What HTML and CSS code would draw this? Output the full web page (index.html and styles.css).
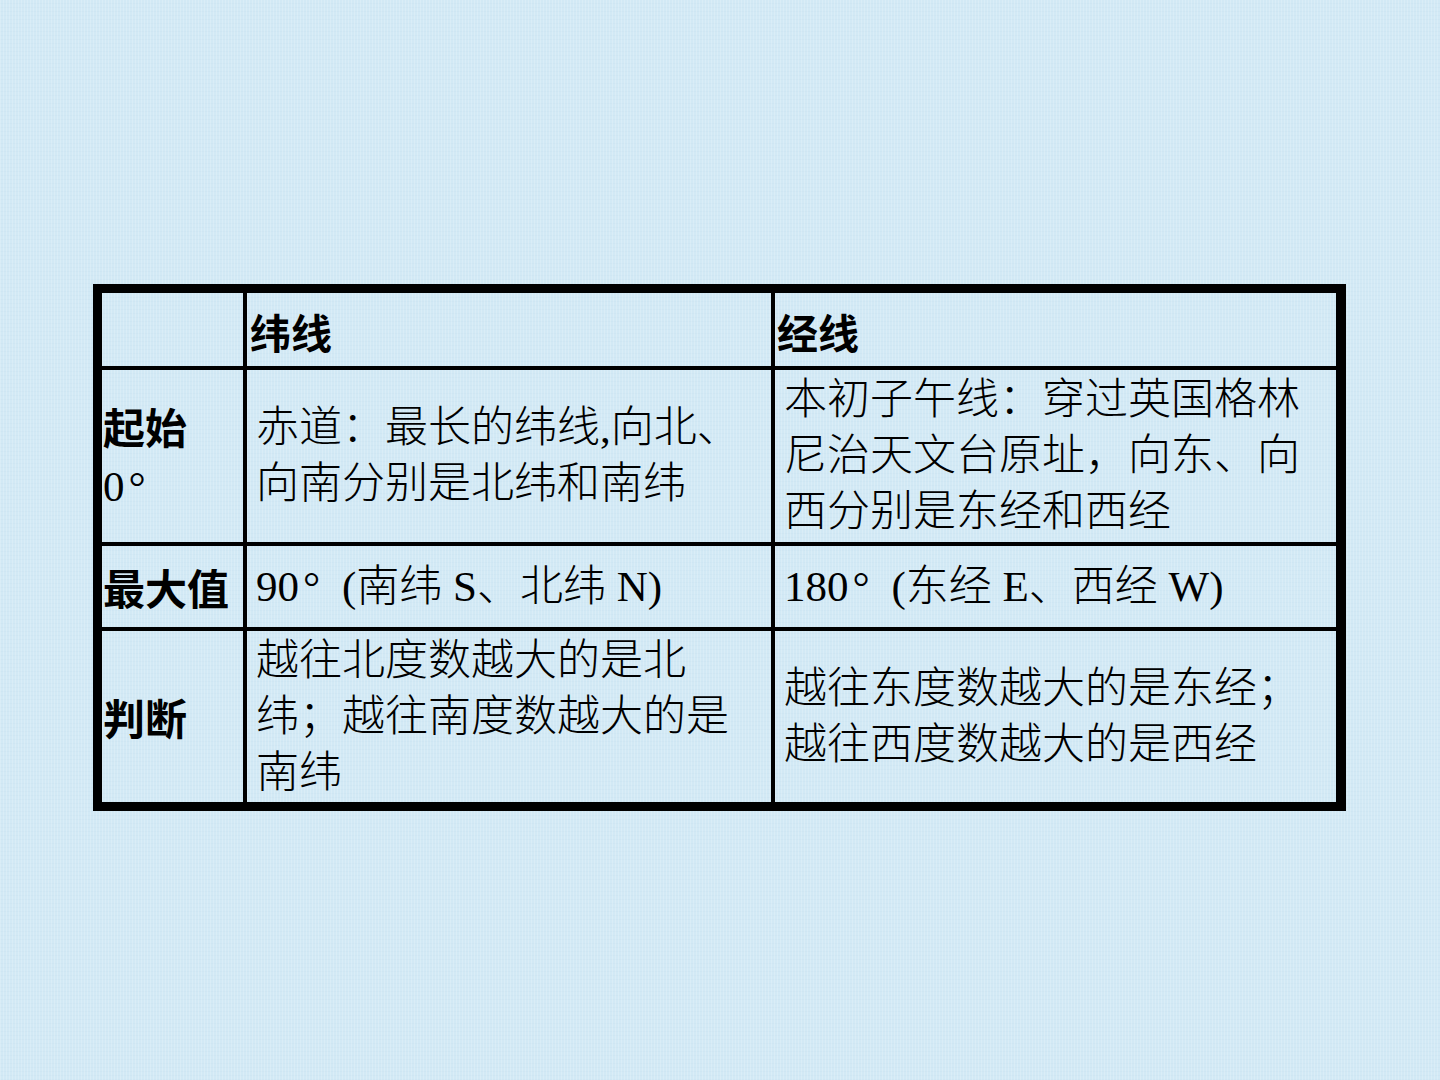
FILE: index.html
```html
<!DOCTYPE html>
<html lang="zh-CN">
<head>
<meta charset="utf-8">
<title>纬线与经线</title>
<link rel="stylesheet" href="styles.css">
</head>
<body>
<main class="slide">
  <div class="grid">
    <div class="cell head"><div class="txt"></div></div>
    <div class="cell head"><div class="txt">纬线</div></div>
    <div class="cell head col3"><div class="txt">经线</div></div>

    <div class="cell label"><div class="txt">起始<br><span class="num">0</span><span class="deg">°</span></div></div>
    <div class="cell body"><div class="txt">赤道：最长的纬线,向北、<br>向南分别是北纬和南纬</div></div>
    <div class="cell body"><div class="txt">本初子午线：穿过英国格林<br>尼治天文台原址，向东、向<br>西分别是东经和西经</div></div>

    <div class="cell label"><div class="txt">最大值</div></div>
    <div class="cell body"><div class="txt">90<span class="deg">°</span>(南纬 S、北纬 N)</div></div>
    <div class="cell body"><div class="txt">180<span class="deg">°</span>(东经 E、西经 W)</div></div>

    <div class="cell label"><div class="txt">判断</div></div>
    <div class="cell body"><div class="txt">越往北度数越大的是北<br>纬；越往南度数越大的是<br>南纬</div></div>
    <div class="cell body"><div class="txt">越往东度数越大的是东经；<br>越往西度数越大的是西经</div></div>
  </div>
</main>
</body>
</html>
```

FILE: styles.css
```css
html, body {
  margin: 0;
  padding: 0;
}

body {
  width: 1440px;
  height: 1080px;
  overflow: hidden;
  background-color: #d2e9f5;
  background-image:
    repeating-linear-gradient(90deg, rgba(255,255,255,0.18) 0 1px, rgba(255,255,255,0) 1px 3px),
    repeating-linear-gradient(0deg, rgba(180,210,230,0.12) 0 1px, rgba(255,255,255,0) 1px 4px);
  font-family: "Liberation Serif", "Noto Sans CJK SC", serif;
  color: #000;
}

.slide {
  padding: 284px 0 0 93px;
}

.grid {
  display: grid;
  width: 1253px;
  box-sizing: border-box;
  padding: 9px 10px 9px 9px;
  background: #000;
  grid-template-columns: 141px 524px 561px;
  grid-template-rows: 73px 172px 81px 171px;
  column-gap: 4px;
  row-gap: 4px;
}

.cell {
  background-color: #d2e9f5;
  background-image:
    repeating-linear-gradient(90deg, rgba(255,255,255,0.18) 0 1px, rgba(255,255,255,0) 1px 3px),
    repeating-linear-gradient(0deg, rgba(180,210,230,0.12) 0 1px, rgba(255,255,255,0) 1px 4px);
  display: flex;
  align-items: center;
  white-space: nowrap;
  font-size: 43px;
  line-height: 56px;
}

.head {
  font-family: "Noto Sans CJK SC", sans-serif;
  font-weight: 700;
  font-size: 41px;
  padding-left: 3px;
  padding-top: 2px;
}

.head.col3 {
  padding-left: 2px;
}

.label {
  font-family: "Noto Sans CJK SC", sans-serif;
  font-weight: 700;
  font-size: 42px;
  line-height: 57px;
  padding-left: 1px;
}

.label .num {
  font-family: "Liberation Serif", serif;
  font-weight: 400;
  font-size: 43px;
}

.body {
  font-family: "Liberation Serif", "Noto Sans CJK SC", serif;
  font-weight: 300;
  padding-left: 9px;
}

.deg {
  display: inline-block;
  width: 1em;
  padding-left: 4px;
  box-sizing: border-box;
  text-align: left;
  font-family: "Liberation Serif", serif;
  font-weight: 400;
  font-size: 43px;
}
```
